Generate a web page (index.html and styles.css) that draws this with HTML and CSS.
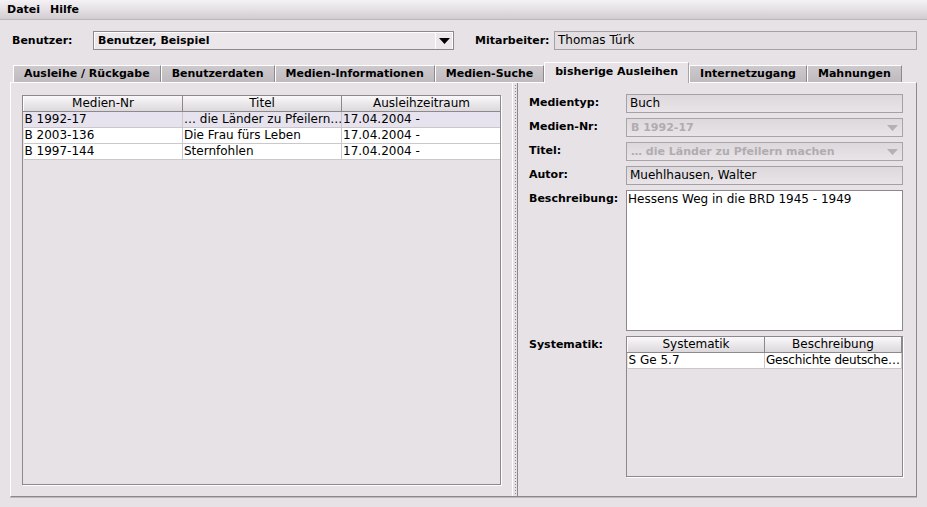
FILE: index.html
```html
<!DOCTYPE html>
<html lang="de">
<head>
<meta charset="utf-8">
<title>Bibliothek</title>
<link rel="stylesheet" href="styles.css">
</head>
<body>
<div class="app">
  <div class="menubar">
    <span class="menu">Datei</span>
    <span class="menu">Hilfe</span>
  </div>

  <div class="toprow">
    <span class="lbl lbl-user">Benutzer:</span>
    <div class="combo combo-user">
      <span class="combo-text">Benutzer, Beispiel</span>
      <span class="combo-btn"><svg width="11" height="6" viewBox="0 0 11 6"><polygon points="0,0 11,0 5.5,6" fill="#000"/></svg></span>
    </div>
    <span class="lbl lbl-staff">Mitarbeiter:</span>
    <div class="field field-staff">Thomas Türk</div>
  </div>

  <div class="tabs">
    <div class="tab">Ausleihe / Rückgabe</div>
    <div class="tab">Benutzerdaten</div>
    <div class="tab">Medien-Informationen</div>
    <div class="tab">Medien-Suche</div>
    <div class="tab tab-active">bisherige Ausleihen</div>
    <div class="tab">Internetzugang</div>
    <div class="tab">Mahnungen</div>
  </div>

  <div class="panel">
    <div class="leftpane">
      <div class="scrollbox">
        <table class="grid">
          <colgroup><col class="c1"><col class="c2"><col class="c3"></colgroup>
          <thead>
            <tr><th>Medien-Nr</th><th>Titel</th><th>Ausleihzeitraum</th></tr>
          </thead>
          <tbody>
            <tr class="sel"><td>B 1992-17</td><td>… die Länder zu Pfeilern…</td><td>17.04.2004 -</td></tr>
            <tr><td>B 2003-136</td><td>Die Frau fürs Leben</td><td>17.04.2004 -</td></tr>
            <tr><td>B 1997-144</td><td>Sternfohlen</td><td>17.04.2004 -</td></tr>
          </tbody>
        </table>
      </div>
    </div>

    <div class="divider"><span class="dots"></span></div>

    <div class="rightpane">
      <div class="form">
        <span class="lbl flbl">Medientyp:</span>
        <div class="field ro">Buch</div>

        <span class="lbl flbl">Medien-Nr:</span>
        <div class="combo dis">
          <span class="combo-text">B 1992-17</span>
          <span class="combo-arrow"><svg width="11" height="6" viewBox="0 0 11 6"><polygon points="0,0 11,0 5.5,6" fill="#b4b0b4"/></svg></span>
        </div>

        <span class="lbl flbl">Titel:</span>
        <div class="combo dis">
          <span class="combo-text">… die Länder zu Pfeilern machen</span>
          <span class="combo-arrow"><svg width="11" height="6" viewBox="0 0 11 6"><polygon points="0,0 11,0 5.5,6" fill="#b4b0b4"/></svg></span>
        </div>

        <span class="lbl flbl">Autor:</span>
        <div class="field ro">Muehlhausen, Walter</div>

        <span class="lbl flbl">Beschreibung:</span>
        <div class="textarea">Hessens Weg in die BRD 1945 - 1949</div>

        <span class="lbl flbl">Systematik:</span>
        <div class="scrollbox sysbox">
          <table class="grid">
            <colgroup><col class="s1"><col class="s2"></colgroup>
            <thead><tr><th>Systematik</th><th>Beschreibung</th></tr></thead>
            <tbody><tr><td>S Ge 5.7</td><td class="tight">Geschichte deutsche…</td></tr></tbody>
          </table>
        </div>
      </div>
    </div>
  </div>
</div>
</body>
</html>
```

FILE: styles.css
```css
* { box-sizing: border-box; }

html, body {
  margin: 0;
  padding: 0;
  background: #e6e2e6;
}

body {
  font-family: "DejaVu Sans", "Liberation Sans", sans-serif;
  font-size: 12px;
  color: #000;
}

.app {
  width: 927px;
  height: 507px;
  display: flex;
  flex-direction: column;
  overflow: hidden;
}

/* menu bar */
.menubar {
  height: 20px;
  display: flex;
  align-items: center;
  padding-left: 2px;
  background: linear-gradient(#f4f2f4, #e6e2e6 45%, #d0ccd0);
  border-bottom: 1px solid #bcb8bc;
}

.menu {
  font-weight: bold;
  font-size: 11px;
  padding: 0 5px;
  line-height: 20px;
}

.lbl {
  font-weight: bold;
  font-size: 11px;
  white-space: nowrap;
}

/* top row */
.toprow {
  display: flex;
  align-items: center;
  margin-top: 11px;
  height: 19px;
  padding-left: 12px;
}

.lbl-user { width: 81px; }
.lbl-staff { width: 79px; margin-left: 21px; }

.combo {
  height: 19px;
  display: flex;
  align-items: center;
  border: 1px solid #8c888c;
}

.combo-user {
  width: 361px;
  background: #ebe7eb;
  box-shadow: inset 1px 1px 0 #fff;
}

.combo-text {
  flex: 1;
  font-weight: bold;
  font-size: 11px;
  padding-left: 4px;
  white-space: nowrap;
  overflow: hidden;
}

.combo-btn {
  width: 18px;
  height: 17px;
  display: flex;
  align-items: center;
  justify-content: center;
  border-left: 1px solid #fff;
  border-right: 1px solid #fff;
}

.field {
  height: 19px;
  line-height: 17px;
  border: 1px solid #a4a0a4;
  padding-left: 3px;
  white-space: nowrap;
}

.field-staff {
  width: 363px;
  background: #e2dee2;
}

/* tabs */
.tabs {
  display: flex;
  align-items: flex-end;
  margin-top: 12px;
  padding-left: 13px;
  height: 20px;
  position: relative;
  z-index: 1;
}

.tab {
  height: 17px;
  line-height: 16px;
  padding: 0 10px;
  font-weight: bold;
  font-size: 11px;
  white-space: nowrap;
  background: linear-gradient(#cdc9cd, #bebabe);
  border-top: 1px solid #fff;
  border-left: 1px solid #fff;
  border-right: 1px solid #8c888c;
}

.tab-active {
  height: 21px;
  line-height: 17px;
  margin-bottom: -1px;
  background: #e6e2e6;
  border-right: 1px solid #a8a4a8;
}

/* panel */
.panel {
  margin-left: 10px;
  width: 907px;
  height: 415px;
  display: flex;
  border-top: 1px solid #fff;
  border-left: 1px solid #fff;
  border-right: 1px solid #8c888c;
  border-bottom: 1px solid #8c888c;
  box-shadow: 0 1px 0 #bcb8bc;
}

.leftpane {
  width: 501px;
  padding: 12px 11px 11px 11px;
  display: flex;
}

.scrollbox {
  flex: 1;
  border: 1px solid #8c888c;
  box-shadow: 1px 1px 0 #fff;
  background: #e6e2e6;
  overflow: hidden;
}

.grid {
  border-collapse: collapse;
  table-layout: fixed;
  width: 100%;
  font-size: 12px;
}

.grid col.c1 { width: 159px; }
.grid col.c2 { width: 159px; }
.grid col.c3 { width: 160px; }

.grid th {
  height: 15px;
  padding: 0;
  font-weight: normal;
  text-align: center;
  line-height: 14px;
  background: linear-gradient(#faf8fa, #dcd8dc);
  border-right: 1px solid #8c888c;
  border-left: 1px solid #fff;
  border-bottom: 1px solid #8c888c;
  white-space: nowrap;
}

.grid td {
  height: 16px;
  padding: 0 0 0 1px;
  line-height: 15px;
  background: #fff;
  border-right: 1px solid #cbc7cb;
  border-bottom: 1px solid #cbc7cb;
  white-space: nowrap;
  overflow: hidden;
}

.grid td.tight { letter-spacing: -0.2px; }

.grid tr.sel td { background: #e6e3ee; }

/* divider */
.divider {
  width: 6px;
  display: flex;
  justify-content: center;
  border-left: 1px solid #fff;
  border-right: 1px solid #8c888c;
}

.dots {
  width: 1px;
  margin-top: 2px;
  background: repeating-linear-gradient(#8c888c 0 1px, transparent 1px 3px);
}

/* right pane */
.rightpane {
  flex: 1;
  padding: 11px 12px 0 11px;
}

.form {
  display: grid;
  grid-template-columns: 97px 277px;
  grid-template-rows: 19px 19px 19px 19px 141px 141px;
  row-gap: 5px;
}

.flbl {
  line-height: 16px;
  padding-top: 1px;
}

.ro {
  background: linear-gradient(#dcd8dc, #e8e4e8);
  border-color: #a4a0a4;
}

.dis {
  background: linear-gradient(#dcd8dc, #e8e4e8);
  border-color: #a8a4a8;
}

.dis .combo-text {
  color: #b0acb0;
}

.combo-arrow {
  width: 20px;
  display: flex;
  justify-content: center;
}

.textarea {
  background: #fff;
  border: 1px solid #8c888c;
  padding: 1px 1px 0 1px;
  line-height: 15px;
}

.sysbox {
  flex: none;
}

.grid col.s1 { width: 137px; }
.grid col.s2 { width: 137px; }
```
